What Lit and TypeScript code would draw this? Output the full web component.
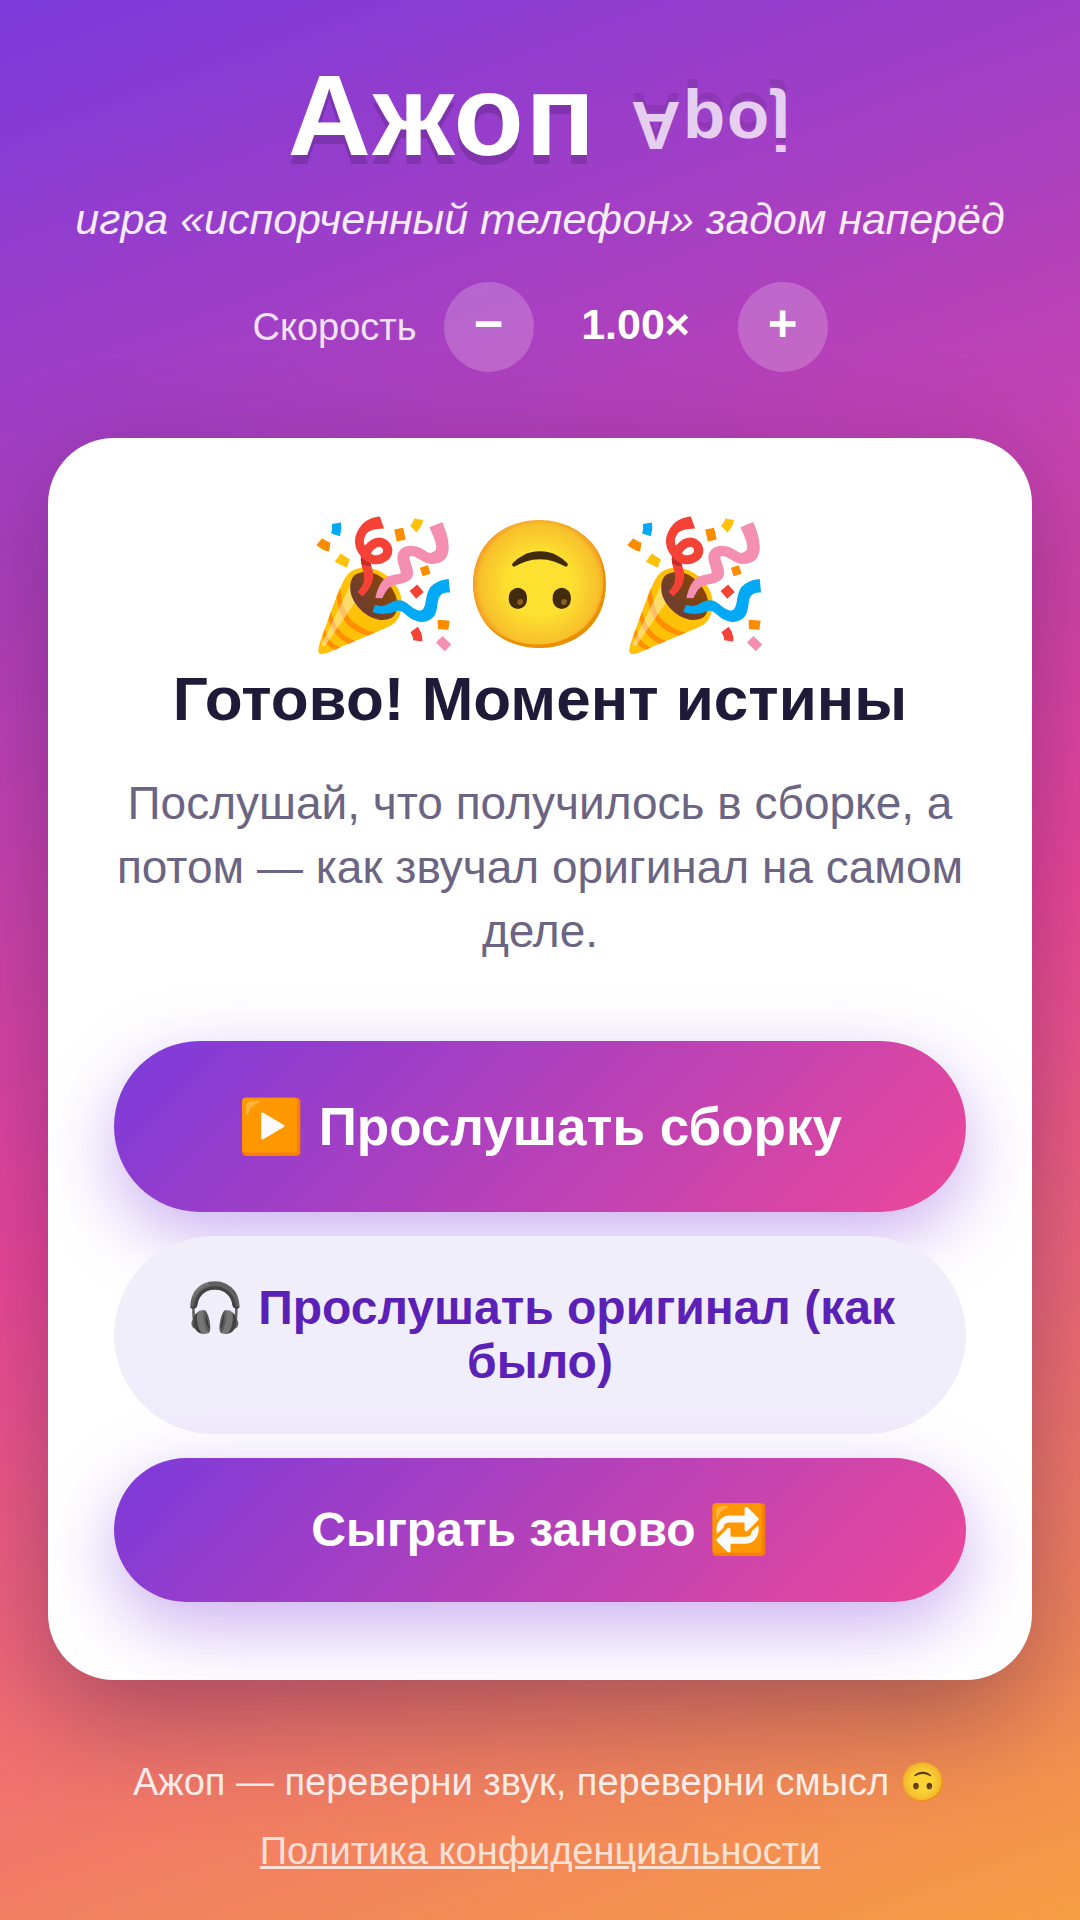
import { LitElement, html, css } from "lit";
import { customElement, state } from "lit/decorators.js";

@customElement("app-root")
export class AppRoot extends LitElement {
  static styles = css`
    :host {
      display: block;
      min-height: 100vh;
      box-sizing: border-box;
      padding: 54px 48px 36px;
      background: linear-gradient(160deg, #7c3adb 0%, #ec4899 55%, #f59e42 100%);
      font-family: "Liberation Sans", "Noto Color Emoji", sans-serif;
      color: #fff;
      text-align: center;
    }
    h1, h2, p { margin: 0; }
    .title {
      font-size: 115px;
      line-height: 123px;
      letter-spacing: 2px;
      text-shadow: 0 9px 0 rgba(0, 0, 0, 0.15);
    }
    .flip {
      display: inline-block;
      font-size: 69px;
      line-height: 76px;
      vertical-align: middle;
      transform: scaleY(-1);
      opacity: 0.75;
    }
    .tagline { font-size: 43px; line-height: 60px; margin-top: 12px; font-style: italic; opacity: 0.9; }
    .speed {
      display: flex;
      justify-content: center;
      align-items: center;
      gap: 24px;
      margin-top: 33px;
    }
    .speed-label { margin-right: 3px; font-size: 38px; line-height: 48px; opacity: 0.85; }
    .speed-value { min-width: 156px; font-size: 43px; line-height: 48px; font-weight: 700; }
    .round {
      width: 90px;
      height: 90px;
      padding: 0;
      border: 0;
      border-radius: 50%;
      background: rgba(255, 255, 255, 0.2);
      color: #fff;
      font: 700 51px/54px "Liberation Sans", sans-serif;
    }
    .round, .speed-value { padding-bottom: 6px; }
    .card {
      margin-top: 66px;
      padding: 78px 66px;
      border-radius: 66px;
      background: #fff;
      box-shadow: 0 36px 108px rgba(30, 10, 60, 0.35);
    }
    .party { font-size: 125px; line-height: 138px; color: #1e1b3a; }
    .heading { margin-top: 6px; font-size: 62px; line-height: 78px; color: #1f1a38; }
    .lead { margin-top: 33px; font-size: 46px; line-height: 64px; color: #6b6483; }
    .actions { display: flex; flex-direction: column; gap: 24px; margin-top: 78px; }
    .btn {
      border: 0;
      border-radius: 999px;
      padding: 45px 66px;
      font: 700 48px/54px "Liberation Sans", "Noto Color Emoji", sans-serif;
    }
    .primary {
      color: #fff;
      background: linear-gradient(135deg, #7c3adb, #ec4899);
      box-shadow: 0 24px 72px rgba(124, 58, 219, 0.4);
    }
    .large { padding: 48px 66px; font-size: 53px; line-height: 75px; }
    .soft { background: #f1eefb; color: #5b21b6; }
    .footer {
      display: flex;
      flex-direction: column;
      align-items: center;
      gap: 9px;
      margin-top: 72px;
      font-size: 38px;
      line-height: 60px;
    }
    .note { opacity: 0.85; }
    .link { color: #fff; opacity: 0.75; text-decoration-thickness: 3px; }
  `;

  @state() private speed = 1;

  private change(delta: number) {
    this.speed = Math.min(2, Math.max(0.5, this.speed + delta));
  }

  render() {
    return html`
      <header>
        <h1 class="title">Ажоп <span class="flip">Apoj</span></h1>
        <p class="tagline">игра «испорченный телефон» задом наперёд</p>
        <div class="speed">
          <span class="speed-label">Скорость</span>
          <button class="round" aria-label="Медленнее" @click=${() => this.change(-0.05)}>−</button>
          <output class="speed-value">${this.speed.toFixed(2)}×</output>
          <button class="round" aria-label="Быстрее" @click=${() => this.change(0.05)}>+</button>
        </div>
      </header>
      <main class="card">
        <div class="party">🎉🙃🎉</div>
        <h2 class="heading">Готово! Момент истины</h2>
        <p class="lead">Послушай, что получилось в сборке, а потом — как звучал оригинал на самом деле.</p>
        <div class="actions">
          <button class="btn primary large">▶️ Прослушать сборку</button>
          <button class="btn soft">🎧 Прослушать оригинал (как было)</button>
          <button class="btn primary">Сыграть заново 🔁</button>
        </div>
      </main>
      <footer class="footer">
        <p class="note">Ажоп — переверни звук, переверни смысл 🙃</p>
        <a class="link" href="#privacy">Политика конфиденциальности</a>
      </footer>
    `;
  }
}
